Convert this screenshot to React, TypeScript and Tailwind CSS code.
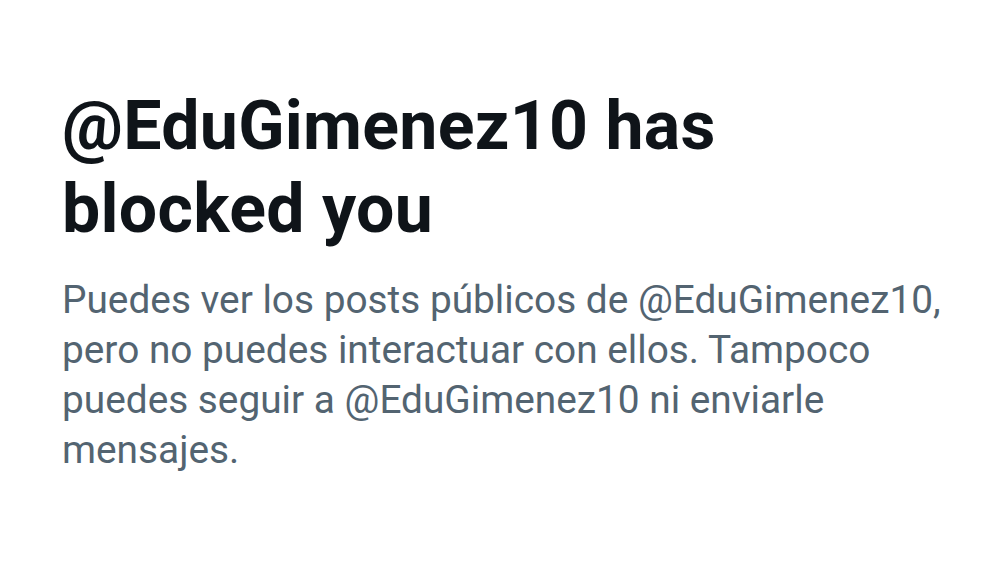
export default function App() {
  return (
    <main className="min-h-screen w-full bg-white font-['Roboto',sans-serif]">
      <div className="pt-[85px] pl-[62px] pr-[40px]">
        <h1 className="text-[68px] leading-[83px] font-bold text-[#0f1419] tracking-[0.3px]">
          @EduGimenez10 has
          <br />
          blocked you
        </h1>
        <p className="mt-[24px] text-[38.8px] leading-[50px] text-[#536471] max-w-[900px]">
          Puedes ver los posts públicos de @EduGimenez10, pero no puedes interactuar con ellos. Tampoco puedes seguir a @EduGimenez10 ni enviarle mensajes.
        </p>
      </div>
    </main>
  );
}
